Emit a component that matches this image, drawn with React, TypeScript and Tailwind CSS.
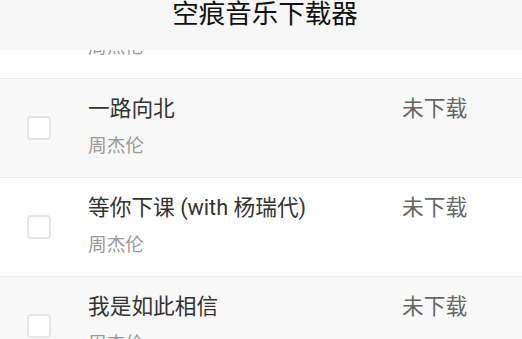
const songs = [
  { title: "晴天", artist: "周杰伦", status: "未下载" },
  { title: "一路向北", artist: "周杰伦", status: "未下载" },
  { title: "等你下课 (with 杨瑞代)", artist: "周杰伦", status: "未下载" },
  { title: "我是如此相信", artist: "周杰伦", status: "未下载" },
];

export default function App() {
  return (
    <div
      className="h-[339px] w-[522px] overflow-hidden bg-white flex flex-col"
      style={{ fontFamily: 'Roboto, "Noto Sans CJK SC", "Noto Sans", sans-serif' }}
    >
      {/* 标题栏 */}
      <header className="h-[50px] shrink-0 bg-[#f7f7f7] flex justify-center relative z-10">
        <h1 className="text-[26.5px] leading-[30px] text-[#111] -mt-[1px] pl-[8px]">空痕音乐下载器</h1>
      </header>

      {/* 歌曲列表 */}
      <div className="flex-1 overflow-hidden">
        <ul className="-mt-[70px]">
          {songs.map((song, i) => (
            <li
              key={i}
              className={`h-[99px] flex items-center border-b border-[#ebeef5] ${
                i % 2 === 1 ? "bg-[#f8f8f8]" : "bg-white"
              }`}
            >
              <div className="w-[88px] shrink-0 flex pl-[27px]">
                <span className="w-[24px] h-[24px] rounded-[4px] border-2 border-[#e4e6ea] bg-white" />
              </div>
              <div className="flex-1 flex flex-col self-start pt-[16px]">
                <span className="text-[21.7px] leading-[28px] text-[#333]">{song.title}</span>
                <span className="text-[18.7px] leading-[24px] text-[#999] mt-[11px]">{song.artist}</span>
              </div>
              <div className="w-[120px] shrink-0 self-start pt-[16px]">
                <span className="text-[21.7px] leading-[28px] text-[#666]">{song.status}</span>
              </div>
            </li>
          ))}
        </ul>
      </div>
    </div>
  );
}
